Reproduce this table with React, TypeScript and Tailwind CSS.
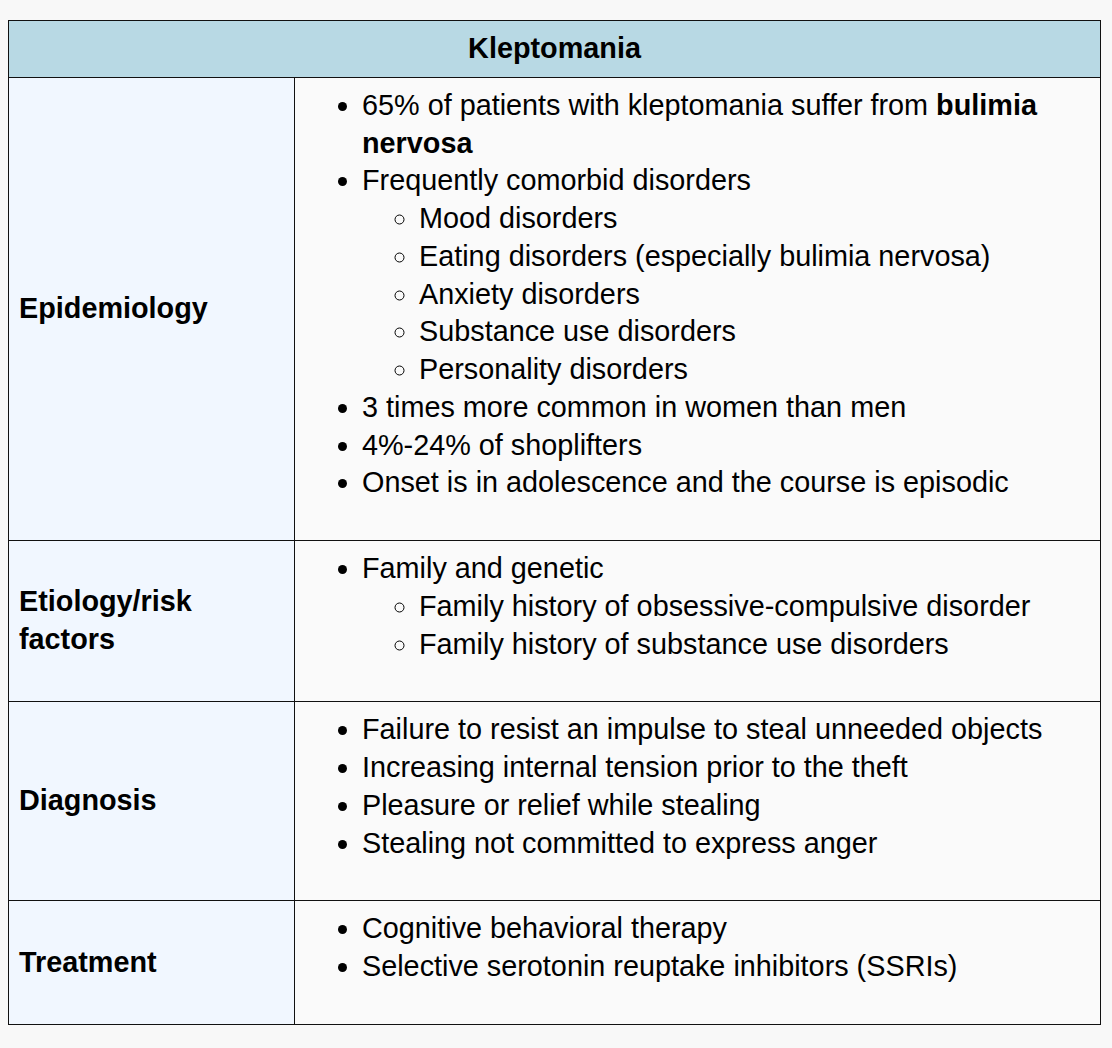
type Item = { text: React.ReactNode; sub?: string[] };

const rows: { label: string; items: Item[] }[] = [
  {
    label: "Epidemiology",
    items: [
      {
        text: (
          <>
            65% of patients with kleptomania suffer from <b>bulimia nervosa</b>
          </>
        ),
      },
      {
        text: "Frequently comorbid disorders",
        sub: [
          "Mood disorders",
          "Eating disorders (especially bulimia nervosa)",
          "Anxiety disorders",
          "Substance use disorders",
          "Personality disorders",
        ],
      },
      { text: "3 times more common in women than men" },
      { text: "4%-24% of shoplifters" },
      { text: "Onset is in adolescence and the course is episodic" },
    ],
  },
  {
    label: "Etiology/risk factors",
    items: [
      {
        text: "Family and genetic",
        sub: [
          "Family history of obsessive-compulsive disorder",
          "Family history of substance use disorders",
        ],
      },
    ],
  },
  {
    label: "Diagnosis",
    items: [
      { text: "Failure to resist an impulse to steal unneeded objects" },
      { text: "Increasing internal tension prior to the theft" },
      { text: "Pleasure or relief while stealing" },
      { text: "Stealing not committed to express anger" },
    ],
  },
  {
    label: "Treatment",
    items: [
      { text: "Cognitive behavioral therapy" },
      { text: "Selective serotonin reuptake inhibitors (SSRIs)" },
    ],
  },
];

export default function App() {
  return (
    <div className="min-h-[1048px] bg-[#f8f8f8] pl-2 pr-3 pt-5 font-['Liberation_Sans',Arial,sans-serif] text-[28.8px] leading-[37.75px] text-black">
      <table className="w-[1093px] border-collapse">
        <thead>
          <tr>
            <th colSpan={2} className="border border-[#111] bg-[#b8d9e4] py-[9px] text-center font-bold">
              Kleptomania
            </th>
          </tr>
        </thead>
        <tbody>
          {rows.map((r) => (
            <tr key={r.label}>
              <td className="w-[286px] border border-[#111] bg-[#f1f7ff] px-[10px] align-middle font-bold">
                {r.label}
              </td>
              <td className="border border-[#111] bg-[#fafafa] pl-[10px] pr-2 pt-[9px] pb-[38px] align-top">
                <ul className="list-disc pl-[57px]">
                  {r.items.map((it, i) => (
                    <li key={i}>
                      {it.text}
                      {it.sub && (
                        <ul className="list-[circle] pl-[57px]">
                          {it.sub.map((s) => (
                            <li key={s}>{s}</li>
                          ))}
                        </ul>
                      )}
                    </li>
                  ))}
                </ul>
              </td>
            </tr>
          ))}
        </tbody>
      </table>
    </div>
  );
}
